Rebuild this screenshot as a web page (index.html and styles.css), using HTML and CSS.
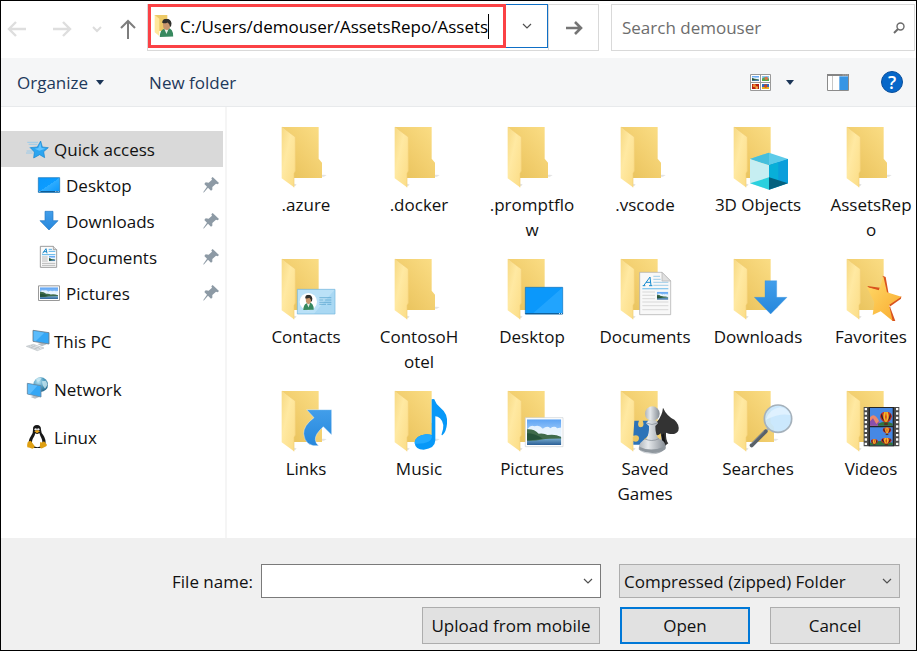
FILE: index.html
```html
<!DOCTYPE html>
<html lang="en">
<head>
<meta charset="utf-8">
<meta name="viewport" content="width=device-width, initial-scale=1">
<title>Open</title>
<link rel="stylesheet" href="styles.css">
</head>
<body>
<svg class="defs" aria-hidden="true">
  <defs>
    <linearGradient id="gBack" x1="0" y1="1" x2="1" y2="0"><stop offset="0" stop-color="#e6c058"/><stop offset=".45" stop-color="#f1cd6c"/><stop offset="1" stop-color="#fbde86"/></linearGradient>
    <linearGradient id="gFront" x1="0" y1="0" x2="1" y2="1"><stop offset="0" stop-color="#f7d983"/><stop offset=".4" stop-color="#ffe9a2"/><stop offset="1" stop-color="#fbdc85"/></linearGradient>
    <linearGradient id="gBlue" x1="0" y1="0" x2="1" y2="1"><stop offset="0" stop-color="#0a97fb"/><stop offset=".5" stop-color="#0c9cff"/><stop offset=".5" stop-color="#2fadff"/><stop offset="1" stop-color="#0896fb"/></linearGradient>
    <linearGradient id="gArrow" x1="0" y1="0" x2="0" y2="1"><stop offset="0" stop-color="#429eea"/><stop offset="1" stop-color="#2687dc"/></linearGradient>
    <linearGradient id="gStar" x1="0" y1="0" x2="1" y2="1"><stop offset="0" stop-color="#ffdc6c"/><stop offset="1" stop-color="#f9a92c"/></linearGradient>
    <linearGradient id="gSky" x1="0" y1="0" x2="0" y2="1"><stop offset="0" stop-color="#5ca3f4"/><stop offset="1" stop-color="#e6f4ff"/></linearGradient>
    <linearGradient id="gSea" x1="0" y1="0" x2="0" y2="1"><stop offset="0" stop-color="#7fb3d3"/><stop offset="1" stop-color="#2b5f96"/></linearGradient>
    <linearGradient id="gPawn" x1="0" y1="0" x2="1" y2="0"><stop offset="0" stop-color="#aeb4ba"/><stop offset=".35" stop-color="#e6e9ec"/><stop offset="1" stop-color="#858c94"/></linearGradient>
    <radialGradient id="gGlobe" cx=".35" cy=".3" r=".8"><stop offset="0" stop-color="#b9e2f3"/><stop offset=".5" stop-color="#4f9dc0"/><stop offset="1" stop-color="#1e5d80"/></radialGradient>
    <symbol id="folder" viewBox="0 0 216 204">
      <path d="M74 158l88 0 8-5-10-1zM66 186l10 0 4-5-8-2z" fill="#e4e4e4"/>
      <path d="M35 9H146V104L156 116V162H72V40z" fill="url(#gBack)"/>
      <path d="M35 9L76 39V141L72 148V190L35 163z" fill="url(#gFront)"/>
      <path d="M36 9L76 39V141L72 148V190" fill="none" stroke="#f2cf76" stroke-width="2"/>
    </symbol>
    <symbol id="scene" viewBox="0 0 100 70" preserveAspectRatio="none">
      <path d="M0 0H100V70H0z" fill="url(#gSky)"/>
      <path d="M2 26q8-12 20-7 14-5 24 7 12-10 22-2 12-8 20 0l12-2v24H0z" fill="#f5faff" opacity=".85"/>
      <path d="M0 50H100V70H0z" fill="url(#gSea)"/>
      <path d="M0 27q20-2 34 12 16-2 26 4 20-4 40 5v4q-40 0-56 3-22 4-44 3z" fill="#3f6b4c"/>
      <path d="M0 38q22 0 46 14-20 4-46 6z" fill="#25533b"/>
    </symbol>
    <symbol id="user" viewBox="0 0 40 44" preserveAspectRatio="none">
      <path d="M1 44q1-16 11-19l10-3q17 2 17 21z" fill="#38895f"/>
      <path d="M14 25l6 12 6-13z" fill="#e9eee9"/>
      <path d="M10 12q0-10 11-10 10 1 10 12 0 10-8 13-8 1-12-6z" fill="#c8966d"/>
      <path d="M8 10Q8 0 20 0q12 0 14 11 0 7-4 9-1-8-7-11-8 4-15 1z" fill="#30302c"/>
    </symbol>
    <symbol id="pin" viewBox="609 201 48 48">
      <path d="M638 201L657 219 653 223 648 221 637 231 637 239 633 242 624 233 611 248 610 246 621 230 613 222 617 217 626 218 636 209 634 205z" fill="#8d9aa5"/>
    </symbol>
    <symbol id="chevron" viewBox="0 0 12 12"><path d="M2 4l4 4 4-4" fill="none" stroke="#505050" stroke-width="1.2"/></symbol>
    <symbol id="balloon" viewBox="0 0 36 44" preserveAspectRatio="none">
      <path d="M1 15Q2 0 18 0t17 15q-1 10-11 18H13Q2 25 1 15z" fill="#c93122"/>
      <path d="M6 5q-6 12 6 24zM30 5q6 12-6 24z" fill="#252432"/>
      <path d="M13 1q-6 16 2 31h6q8-15 2-31z" fill="#f1bd29"/>
      <path d="M18 0q-5 16 0 32 4-16 0-32z" fill="#d23723"/>
      <path d="M13 35h10v8H13z" fill="#5c321d"/>
    </symbol>
  </defs>
</svg>

<div class="dialog">
  <header class="navbar">
    <nav class="history" aria-label="History">
      <button type="button" aria-label="Back"><svg width="20" height="20" viewBox="0 0 20 20"><path d="M19 10H2M9 3L2 10l7 7" fill="none" stroke="#dedede" stroke-width="2.4"/></svg></button>
      <button type="button" aria-label="Forward"><svg width="20" height="20" viewBox="0 0 20 20"><path d="M1 10H18M11 3l7 7-7 7" fill="none" stroke="#dedede" stroke-width="2.4"/></svg></button>
      <button class="recent" type="button" aria-label="Recent locations"><svg width="12" height="12" viewBox="0 0 12 12"><path d="M2 4l4 4 4-4" fill="none" stroke="#dcdcdc" stroke-width="2"/></svg></button>
      <button type="button" aria-label="Up"><svg width="20" height="22" viewBox="0 0 20 22"><path d="M10 21V3M3 10L10 3l7 7" fill="none" stroke="#7d7d7d" stroke-width="2"/></svg></button>
    </nav>
    <div class="address">
      <div class="path">
        <svg class="path-icon" width="20" height="24" viewBox="464 45 60 72">
          <path d="M466 48h38v48h-26z" fill="#edca67"/><path d="M466 48l14 11v52l-14-11z" fill="#ffe79c"/>
          <use href="#user" x="480" y="59" width="43" height="55"/>
        </svg>
        <input aria-label="Address" type="text" value="C:/Users/demouser/AssetsRepo/Assets"><span class="caret"></span>
      </div>
      <button class="path-more" type="button" aria-label="Previous locations"><svg width="12" height="12"><use href="#chevron"/></svg></button>
      <button class="go" type="button" aria-label="Go"><svg width="18" height="16" viewBox="0 0 18 16"><path d="M1 8H16M10 2l6 6-6 6" fill="none" stroke="#757575" stroke-width="2.600"/></svg></button>
    </div>
    <div class="search">
      <input aria-label="Search demouser" type="text" placeholder="Search demouser">
      <svg width="12" height="12" viewBox="0 0 12 12"><circle cx="7.500" cy="4.500" r="3.500" fill="none" stroke="#6b6b6b" stroke-width="1.400"/><path d="M5 7L1 11" stroke="#6b6b6b" stroke-width="2"/></svg>
    </div>
  </header>

  <div class="toolbar">
    <button class="organize" type="button">Organize <svg width="8" height="5" viewBox="0 0 8 5"><path d="M0 0h8L4 5z" fill="#1b3557"/></svg></button>
    <button type="button">New folder</button>
    <div class="tools">
      <button type="button" aria-label="Change your view"><svg width="21" height="17" viewBox="870 216 63 51">
        <path d="M871.500 217.500h60v48h-60z" fill="#fff" stroke="#999" stroke-width="3"/><path d="M901.500 217v48M872 241.500h60" stroke="#999" stroke-width="3"/>
        <use href="#scene" x="876" y="222" width="21" height="15"/>
        <path d="M906 222h21v15h-21z" fill="#8cc3ef"/><path d="M906 230q10-8 21 0v7h-21z" fill="#58a64b"/><circle cx="919" cy="229" r="5" fill="#d9724c"/>
        <path d="M876 246h21v15h-21z" fill="#b51f12"/><circle cx="883" cy="251" r="5" fill="#ee8932"/><circle cx="890" cy="257" r="4" fill="#f5b54e"/>
        <path d="M906 246h21v15h-21z" fill="#2a6cc4"/><path d="M906 255h21v6h-21z" fill="#e9b21f"/><circle cx="917" cy="252" r="5" fill="#c8451f"/>
      </svg></button>
      <button class="view-more" type="button" aria-label="More view options"><svg width="8" height="5" viewBox="0 0 8 5"><path d="M0 0h8L4 5z" fill="#1b3557"/></svg></button>
      <button class="pane" type="button" aria-label="Show the preview pane"><svg width="22" height="17" viewBox="1101 219 66 51">
        <path d="M1102.500 220.500h63v48h-63z" fill="#fff" stroke="#8b8b8b" stroke-width="3"/><path d="M1101 219h66v6h-66z" fill="#858585"/><path d="M1117.500 225v42" stroke="#aaa" stroke-width="2"/><path d="M1138 226h26v41h-26z" fill="#3795e4"/><path d="M1148 221h3v2h-3zM1154 221h3v2h-3zM1160 221h3v2h-3z" fill="#fff"/>
      </svg></button>
      <button class="help" type="button">?</button>
    </div>
  </div>

  <main class="body">
    <nav class="places" aria-label="Places">
      <ul>
        <li><a class="place current" href="#">
          <svg width="24" height="24" viewBox="78 81 72 72"><path d="M82 97h32M86 103h26M80 123h18M78 129h20M88 113h10" stroke="#7cc4f3" stroke-width="2"/><path d="M122 93L127 111 145 113 131 125 134 143 119 134 101 144 103 126 91 113 112 111z" fill="#2ca5f0" stroke="#1785cf" stroke-width="2"/><path d="M121 98l3 15 12 3-18 6-14-6 11-2z" fill="#62c4ff"/></svg>
          Quick access</a></li>
        <li><a class="place child" href="#">
          <svg width="24" height="24" viewBox="111 189 72 72"><path d="M115 203h64v44h-64z" fill="url(#gBlue)" stroke="#1673b4" stroke-width="2"/><path d="M116 243h62v4h-62z" fill="#0e5c96"/><path d="M118 244h3v2h-3zM166 244h3v2h-3zM173 244h3v2h-3z" fill="#fff"/></svg>
          <span>Desktop</span><svg class="pin" width="16" height="16"><use href="#pin"/></svg></a></li>
        <li><a class="place child" href="#">
          <svg width="24" height="24" viewBox="111 297 72 72"><path d="M135 304h24v28h15l-27 28-27-28h15z" fill="url(#gArrow)" stroke="#2478c4" stroke-width="2"/></svg>
          <span>Downloads</span><svg class="pin" width="16" height="16"><use href="#pin"/></svg></a></li>
        <li><a class="place child" href="#">
          <svg width="24" height="24" viewBox="111 405 72 72"><path d="M121 409h39l10 10v53h-49z" fill="#fbfbfb" stroke="#8a8a8a" stroke-width="2.500"/><path d="M160 409v10h10" fill="#ddd" stroke="#8a8a8a" stroke-width="2"/><path d="M128 430l10-14 3 14M131 425h9" fill="none" stroke="#1787c8" stroke-width="3"/><path d="M146 418h10M146 424h20M126 434h40" stroke="#38a5e2" stroke-width="2.500"/><path d="M126 441h17M126 447h17M126 453h17M126 460h40M126 466h40" stroke="#aaa" stroke-width="2.500"/><use href="#scene" x="147" y="438" width="19" height="16"/></svg>
          <span>Documents</span><svg class="pin" width="16" height="16"><use href="#pin"/></svg></a></li>
        <li><a class="place child" href="#">
          <svg width="24" height="24" viewBox="111 513 72 72"><path d="M115.500 527.500h63v44h-63z" fill="#fff" stroke="#999" stroke-width="3"/><use href="#scene" x="120" y="532" width="54" height="35"/></svg>
          <span>Pictures</span><svg class="pin" width="16" height="16"><use href="#pin"/></svg></a></li>
        <li class="root"><a class="place" href="#">
          <svg width="24" height="24" viewBox="78 60 72 72"><path d="M112 105l14-4 14 5-14 6z" fill="#b9c0c6"/><path d="M99 64l48 7v34l-48-8z" fill="#35a7f5" stroke="#6c7b86" stroke-width="2.500"/><path d="M101 66l32 5-26 26-6-1z" fill="#6cc5ff" opacity=".7"/><path d="M79 112l21-6 32 11-20 8z" fill="#e4e7ea" stroke="#a9b0b5" stroke-width="1.500"/><path d="M86 112l26 9M93 109l27 10M92 116l14-7M104 120l14-6" stroke="#a9b0b5" stroke-width="1.500"/></svg>
          This PC</a></li>
        <li class="root"><a class="place" href="#">
          <svg width="24" height="24" viewBox="78 204 72 72"><circle cx="122" cy="227" r="22" fill="url(#gGlobe)"/><path d="M108 210q8-5 17-3l-5 8-9 3zM126 217l12-2 5 12-8 12-7-10z" fill="#d3edf5" opacity=".75"/><path d="M92 264l14-5 12 5-13 5z" fill="#b9c0c6"/><path d="M82 223l41 7v34l-41-9z" fill="#35a7f5" stroke="#6a88a0" stroke-width="2.500"/><path d="M84 225l28 5-22 25-6-1z" fill="#6cc5ff" opacity=".7"/></svg>
          Network</a></li>
        <li class="root"><a class="place" href="#">
          <svg width="24" height="24" viewBox="78 345 72 72"><path d="M111 345q12 0 12 14 0 8 7 17 9 13 6 29l-14 9h-22l-14-9q-2-14 7-27 7-9 6-19-1-14 12-14z" fill="#171717"/><path d="M106 370q6 4 12-1 3 10 7 17 5 12-1 22-12 7-24 0-7-9-2-21 6-8 8-17z" fill="#fff"/><circle cx="107" cy="358" r="3.500" fill="#eee"/><circle cx="115" cy="358" r="3.500" fill="#eee"/><path d="M103 364l8-4 9 4-9 6z" fill="#e7a41a"/><path d="M89 393q4-2 8 6l7 9q1 6-7 8-8-3-15-4-2-5 1-15zM121 395q4 5 11-1l8 9q2 6-6 8-7 5-12 4-4-5-1-20z" fill="#dfa012"/></svg>
          Linux</a></li>
      </ul>
    </nav>

    <ul class="files">
      <li><svg class="file-icon" viewBox="0 0 216 204"><use href="#folder"/></svg><span>.azure</span></li>
      <li><svg class="file-icon" viewBox="0 0 216 204"><use href="#folder"/></svg><span>.docker</span></li>
      <li><svg class="file-icon" viewBox="0 0 216 204"><use href="#folder"/></svg><span>.promptflo<br>w</span></li>
      <li><svg class="file-icon" viewBox="0 0 216 204"><use href="#folder"/></svg><span>.vscode</span></li>
      <li><svg class="file-icon" viewBox="0 0 216 204"><use href="#folder"/>
        <g transform="translate(-396 -27)"><path d="M480 132l57-19 57 19-57 19z" fill="#5ccbe9"/><path d="M480 132l57-19v38z" fill="#45bfdc"/><path d="M480 132l57 19v73l-57-19z" fill="#c6eef2"/><path d="M537 151l57-19v73l-57 19z" fill="#00a3e0"/><path d="M537 151l57-19v73l-57-17z" fill="#0b9edb"/><path d="M537 151l28-9v55l-28-9z" fill="#08afd8"/><path d="M480 205l57-18v37z" fill="#2bd0de"/><path d="M537 187l57 18-57 19z" fill="#04617f"/></g></svg><span>3D Objects</span></li>
      <li><svg class="file-icon" viewBox="0 0 216 204"><use href="#folder"/></svg><span>AssetsRep<br>o</span></li>

      <li><svg class="file-icon" viewBox="0 0 216 204"><use href="#folder"/>
        <g transform="translate(-30 -18)"><path d="M112 118h113v74H112z" fill="#a9d8f3" stroke="#74b7dd" stroke-width="2"/><path d="M114 120h109l-60 70h-49z" fill="#c7e8fa" opacity=".6"/><circle cx="145" cy="155" r="26" fill="#fff"/><use href="#user" x="129" y="134" width="33" height="46"/><path d="M178 143h36M178 150h12M194 150h20M178 157h36M178 163h20M202 163h12" stroke="#4d9dc9" stroke-width="2"/></g></svg><span>Contacts</span></li>
      <li><svg class="file-icon" viewBox="0 0 216 204"><use href="#folder"/></svg><span>ContosoH<br>otel</span></li>
      <li><svg class="file-icon" viewBox="0 0 216 204"><use href="#folder"/>
        <g transform="translate(-708 -18)"><path d="M796 112h112v80H796z" fill="#0b98fb" stroke="#1170b3" stroke-width="2"/><path d="M907 113v76H820z" fill="#2aa8ff" opacity=".75"/><path d="M796 189h112v4H796z" fill="#0e5f9b"/><path d="M897 190h3v2h-3zM903 190h3v2h-3z" fill="#fff"/></g></svg><span>Desktop</span></li>
      <li><svg class="file-icon" viewBox="0 0 216 204"><use href="#folder"/>
        <g transform="translate(-57 -18)"><path d="M149 67h67l26 26v101h-93z" fill="#f8f8f8" stroke="#a8a8a8" stroke-width="2"/><path d="M216 67v26h26z" fill="#e0e0e0" stroke="#b0b0b0" stroke-width="2"/><path d="M161 107l19-26 3 26M168 97h14M158 107h8M177 107h10" fill="none" stroke="#178bcf" stroke-width="3"/><path d="M190 79h20M190 88h22M190 97h45M190 106h45" stroke="#73b8df" stroke-width="2"/><path d="M157 116h78" stroke="#8ac9ee" stroke-width="4"/><path d="M157 126h38M157 136h38M157 146h38M157 156h78M157 167h78M157 179h78" stroke="#c9c9c9" stroke-width="2"/><use href="#scene" x="201" y="125" width="34" height="24"/></g></svg><span>Documents</span></li>
      <li><svg class="file-icon" viewBox="0 0 216 204"><use href="#folder"/>
        <g transform="translate(-396 -18)"><path d="M525 92h35v50h31l-49 50-49-50h32z" fill="url(#gArrow)" stroke="#3390df" stroke-width="1"/></g></svg><span>Downloads</span></li>
      <li><svg class="file-icon" viewBox="0 0 216 204"><use href="#folder"/>
        <g transform="translate(-735 -18)"><path d="M878 77l9 4 9 51-8 4zM832 108l38 5-4 9-30-9zM934 139l-1 7-35 25-7-7zM890 174l17 39 9 0-18-48z" fill="#d9531e"/><path d="M880 79l11 48 43 13-37 25 11 48-36-29-24 11 5-38-23-46 37 10z" fill="url(#gStar)"/></g></svg><span>Favorites</span></li>

      <li><svg class="file-icon" viewBox="0 0 216 204"><use href="#folder"/>
        <g transform="translate(-30 -24)"><path d="M140 89h75v76l-25-25q-25 22-24 39 1 12 10 18-41 4-45-36-1-24 31-48z" fill="url(#gArrow)" stroke="#fff" stroke-opacity=".6" stroke-width="2"/></g></svg><span>Links</span></li>
      <li><svg class="file-icon" viewBox="0 0 216 204"><use href="#folder"/>
        <g transform="translate(-369 -24)"><path d="M515 58q10-3 10 4 3 11 17 22 22 17 19 47-2 24-14 35-4 0-2-4 12-31-5-47-7-6-14-6v72q-1 25-35 28-25 0-27-20 2-23 34-26 10-1 17 2z" fill="#0798f8"/><path d="M464 189q2-23 34-26 17 0 18 6-1 24-51 22z" fill="#22aaff"/></g></svg><span>Music</span></li>
      <li><svg class="file-icon" viewBox="0 0 216 204"><use href="#folder"/>
        <g transform="translate(-708 -24)"><path d="M796 113h113v87H796z" fill="#fff" stroke="#ccd0d4" stroke-width="2"/><use href="#scene" x="801" y="118" width="103" height="77"/></g></svg><span>Pictures</span></li>
      <li><svg class="file-icon" viewBox="0 0 216 204"><use href="#folder"/>
        <g transform="translate(-57 -24)"><path d="M133 122h14q-8 18 5 20 14-2 6-20h28v34l-25 24-4 14h-27v-10q17 4 17-10-1-11-17-7z" fill="#2c73b8"/><path d="M219 83q11 25 34 36 17 15 12 33-8 14-29 9l-8-3q-1 22 7 32l-8 6-10-4-5-32q-12 12-20-2-4-18 8-31 17-21 19-44z" fill="#333"/><path d="M222 160l5 38-10-4-1-30z" fill="#151515"/><path d="M176 121h22l6 9-8 8q0 26 9 37 24 8 22 30-15 18-42 18-27-1-39-15 0-24 23-32 9-13 8-38l-9-8z" fill="url(#gPawn)"/><circle cx="187" cy="101" r="22" fill="url(#gPawn)"/><path d="M148 200q35 18 78-1v9q-36 22-78 1z" fill="#8f979e"/><path d="M169 129q17 9 34 0M163 176q22 11 44 0" fill="none" stroke="#7f878f" stroke-width="2"/></g></svg><span>Saved<br>Games</span></li>
      <li><svg class="file-icon" viewBox="0 0 216 204"><use href="#folder"/>
        <g transform="translate(-396 -24)"><path d="M535 146l-10 11" stroke="#a0a9b0" stroke-width="6"/><path d="M527 154l-42 42" stroke="#596169" stroke-width="12" stroke-linecap="round"/><path d="M523 153l-40 39" stroke="#848d95" stroke-width="3"/><circle cx="564" cy="116" r="41" fill="#c7e6fd" fill-opacity=".93" stroke="#a5b1bb" stroke-width="5"/><path d="M527 120q10-32 42-38 22 0 33 24-30-8-75 14z" fill="#e7f5ff" opacity=".7"/></g></svg><span>Searches</span></li>
      <li><svg class="file-icon" viewBox="0 0 216 204"><use href="#folder"/>
        <g transform="translate(-735 -24)"><path d="M821 81h107v118H821z" fill="#4b4b4b"/><path d="M827.500 84v114M921.500 84v114" stroke="#fff" stroke-width="7" stroke-dasharray="7 6"/><path d="M836 81h76v118h-76z" fill="#252525"/><path d="M840 84h68v53h-68zM840 142h68v54h-68z" fill="#4688e4"/><path d="M840 112q14-18 28 13v12h-28z" fill="#eb886c"/><path d="M840 124l9-9 10 17 9-10v15h-28z" fill="#8b4fab"/><path d="M864 131q24-12 44 0v6h-44zM840 188q30-10 68 0v8h-68z" fill="#31733c"/><use href="#balloon" x="869" y="95" width="38" height="42"/><use href="#balloon" x="877" y="142" width="28" height="24"/><use href="#balloon" x="842" y="177" width="22" height="20"/><use href="#balloon" x="872" y="173" width="34" height="24"/></g></svg><span>Videos</span></li>
    </ul>
  </main>

  <footer class="footer">
    <div class="row">
      <label for="filename">File name:</label>
      <div class="combo filename"><input id="filename" type="text"><svg width="12" height="12"><use href="#chevron"/></svg></div>
      <div class="combo filetype"><select aria-label="File type"><option>Compressed (zipped) Folder</option></select><svg width="12" height="12"><use href="#chevron"/></svg></div>
    </div>
    <div class="row actions">
      <button class="btn upload" type="button">Upload from mobile</button>
      <button class="btn primary" type="button">Open</button>
      <button class="btn" type="button">Cancel</button>
    </div>
  </footer>
</div>
</body>
</html>
```
FILE: styles.css
```css
* { box-sizing: border-box; }

body {
  margin: 0;
  background: #fff;
  color: #111;
  font-family: "Open Sans", "Noto Sans", sans-serif;
  font-size: 17px;
  line-height: 25px;
}

button, input, select { font: inherit; color: inherit; }
button { padding: 0; border: 0; background: none; }
svg { display: block; flex: none; }
ul { margin: 0; padding: 0; list-style: none; }
.defs { position: absolute; width: 0; height: 0; }

.dialog {
  display: flex;
  flex-direction: column;
  min-height: 100vh;
  border: 1px solid #000;
}

/* Navigation bar */
.navbar { display: flex; height: 57px; padding: 3px 1px 7px 6px; }
.history { display: flex; align-items: center; gap: 25px; width: 140px; padding-top: 2px; }
.history .recent { margin: 0 -10px 0 -6px; }
.address { display: flex; flex: 1; border: 1px solid #d9d9d9; }
.path {
  display: flex;
  flex: 1;
  align-items: center;
  min-width: 0;
  height: 44px;
  margin-top: -1px;
  padding-left: 3px;
  border: 3px solid #fb4145;
}
.path input { field-sizing: content; padding: 0; margin-left: 6px; border: 0; outline: 0; color: #000; }
.caret { width: 1px; height: 25px; background: #000; }
.path-more {
  display: grid;
  place-items: center;
  width: 42px;
  height: 44px;
  margin-top: -1px;
  border: 1px solid #0f6fc6;
  border-left: 0;
}
.go { display: grid; place-items: center; width: 50px; border-left: 1px solid #d9d9d9; }
.search {
  display: flex;
  align-items: center;
  width: 304px;
  margin-left: 12px;
  padding: 0 9px 0 10px;
  border: 1px solid #d9d9d9;
}
.search input { flex: 1; min-width: 0; padding: 0; border: 0; outline: 0; }
.search input::placeholder { color: #6d6d6d; opacity: 1; }

/* Toolbar */
.toolbar {
  display: flex;
  align-items: center;
  gap: 45px;
  height: 49px;
  padding: 0 13px 0 16px;
  border-bottom: 1px solid #e8eaec;
  background: #f5f6f7;
  color: #1e395b;
}
.organize { display: flex; align-items: center; gap: 8px; }
.tools { display: flex; align-items: center; margin-left: auto; }
.view-more { margin: 0 33px 0 15px; }
.pane { margin-right: 32px; }
.help {
  width: 22px;
  height: 22px;
  border: 1px solid #0a4f9c;
  border-radius: 50%;
  background: #0667c9;
  color: #fff;
  font-size: 18px;
  font-weight: 600;
  line-height: 20px;
}

/* Body */
.body { display: flex; flex: 1; }
.places { width: 226px; padding: 24px 2px 0 0; border-right: 2px solid #f5f5f5; }
.place {
  display: flex;
  align-items: center;
  gap: 4px;
  height: 36px;
  padding: 0 4px 0 25px;
  color: inherit;
  text-decoration: none;
}
.place.child { gap: 5px; padding-left: 36px; }
.place.current { background: #d9d9d9; }
.root { margin-top: 12px; }
.pin { margin-left: auto; }

.files {
  display: grid;
  flex: 1;
  grid-template-columns: repeat(auto-fill, 90px);
  grid-auto-rows: 132px;
  align-content: start;
  column-gap: 23px;
  padding: 17px 0 0 34px;
}
.files li {
  display: flex;
  flex-direction: column;
  align-items: center;
  text-align: center;
  white-space: nowrap;
}
.file-icon { width: 72px; height: 68px; }

/* Footer */
.footer { padding: 26px 16px 6px; background: #f0f0f0; }
.row { display: flex; align-items: center; }
.row label { width: 236px; text-align: right; }
.combo { position: relative; height: 34px; }
.combo svg { position: absolute; top: 11px; right: 7px; pointer-events: none; }
.combo input, .combo select {
  width: 100%;
  height: 100%;
  padding: 0 4px;
  border: 1px solid #7a7a7a;
  border-radius: 0;
  outline: 0;
  background: #fff;
  appearance: none;
}
.combo select { border-color: #adadad; background: #e1e1e1; }
.filename { flex: 1; margin: 0 18px 0 8px; }
.filetype { width: 281px; }
.actions { justify-content: flex-end; gap: 20px; margin-top: 9px; }
.btn { width: 130px; height: 37px; border: 1px solid #adadad; background: #e1e1e1; }
.btn.upload { width: 178px; }
.btn.primary { border: 2px solid #0078d7; }
```
